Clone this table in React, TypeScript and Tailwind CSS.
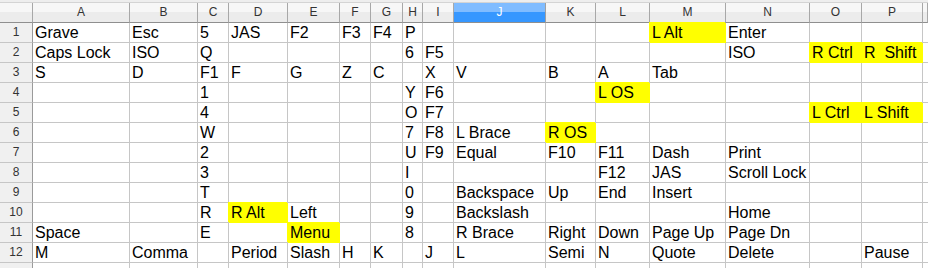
const COLS = ["A", "B", "C", "D", "E", "F", "G", "H", "I", "J", "K", "L", "M", "N", "O", "P"]

// one entry per row, columns A..P
const DATA: string[][] = [
  ["Grave", "Esc", "5", "JAS", "F2", "F3", "F4", "P", "", "", "", "", "L Alt", "Enter", "", ""],
  ["Caps Lock", "ISO", "Q", "", "", "", "", "6", "F5", "", "", "", "", "ISO", "R Ctrl", "R  Shift"],
  ["S", "D", "F1", "F", "G", "Z", "C", "", "X", "V", "B", "A", "Tab", "", "", ""],
  ["", "", "1", "", "", "", "", "Y", "F6", "", "", "L OS", "", "", "", ""],
  ["", "", "4", "", "", "", "", "O", "F7", "", "", "", "", "", "L Ctrl", "L Shift"],
  ["", "", "W", "", "", "", "", "7", "F8", "L Brace", "R OS", "", "", "", "", ""],
  ["", "", "2", "", "", "", "", "U", "F9", "Equal", "F10", "F11", "Dash", "Print", "", ""],
  ["", "", "3", "", "", "", "", "I", "", "", "", "F12", "JAS", "Scroll Lock", "", ""],
  ["", "", "T", "", "", "", "", "0", "", "Backspace", "Up", "End", "Insert", "", "", ""],
  ["", "", "R", "R Alt", "Left", "", "", "9", "", "Backslash", "", "", "", "Home", "", ""],
  ["Space", "", "E", "", "Menu", "", "", "8", "", "R Brace", "Right", "Down", "Page Up", "Page Dn", "", ""],
  ["M", "Comma", "", "Period", "Slash", "H", "K", "", "J", "L", "Semi", "N", "Quote", "Delete", "", "Pause"],
  ["", "", "", "", "", "", "", "", "", "", "", "", "", "", "", ""],
]

// row index (0-based), column letter
const YELLOW = ["0M", "1O", "1P", "3L", "4O", "4P", "5K", "9D", "10E"]

function HeaderCell({ label, selected }: { label: string; selected?: boolean }) {
  return (
    <div
      className={
        selected
          ? "h-5 border-r border-b border-r-[#a0a0a0] border-b-[#8f8f8f] bg-[linear-gradient(#80bcff_45%,#3697ff_45%)] text-center text-[12px] leading-[19px] text-white"
          : "h-5 border-r border-b border-r-[#a8a8a8] border-b-[#8f8f8f] bg-[linear-gradient(#f7f7f7_45%,#ececec_45%)] text-center text-[12px] leading-[19px] text-[#333]"
      }
    >
      {label}
    </div>
  )
}

function Cell({ text, yellow }: { text: string; yellow: boolean }) {
  return (
    <div
      className={
        yellow
          ? "h-5 overflow-hidden whitespace-pre border-r border-b border-[#ffff00] bg-[#ffff00] pl-[2px] text-[16px] leading-[20px] text-black shadow-[-1px_-1px_0_#ffff00]"
          : "h-5 overflow-hidden whitespace-pre border-r border-b border-[#c6c6c6] bg-white pl-[2px] text-[16px] leading-[20px] text-black"
      }
    >
      {text}
    </div>
  )
}

export default function App() {
  return (
    <div className="h-[268px] w-[928px] overflow-hidden bg-white font-['Liberation_Sans',Arial,sans-serif]">
      <div className="h-[3px] border-b border-[#d4d4d4] bg-[#eeeeee]" />
      <div className="grid grid-cols-[33px_97px_68px_31px_59px_52px_31px_32px_20px_31px_92px_50px_54px_76px_84px_52px_61px_1fr]">
        <HeaderCell label="" />
        {COLS.map(c => (
          <HeaderCell key={c} label={c} selected={c === "J"} />
        ))}
        <HeaderCell label="" />

        {DATA.map((row, r) => (
          <div key={r} className="contents">
            <div className="h-5 border-r border-b border-r-[#9a9a9a] border-b-[#c6c6c6] bg-[#f0f0f0] text-center text-[12px] leading-[19px] text-[#333]">
              {r < 12 ? r + 1 : ""}
            </div>
            {row.map((text, c) => (
              <Cell key={c} text={text} yellow={YELLOW.includes(r + COLS[c])} />
            ))}
            <div className="h-5 border-b border-[#c6c6c6] bg-white" />
          </div>
        ))}
      </div>
    </div>
  )
}
